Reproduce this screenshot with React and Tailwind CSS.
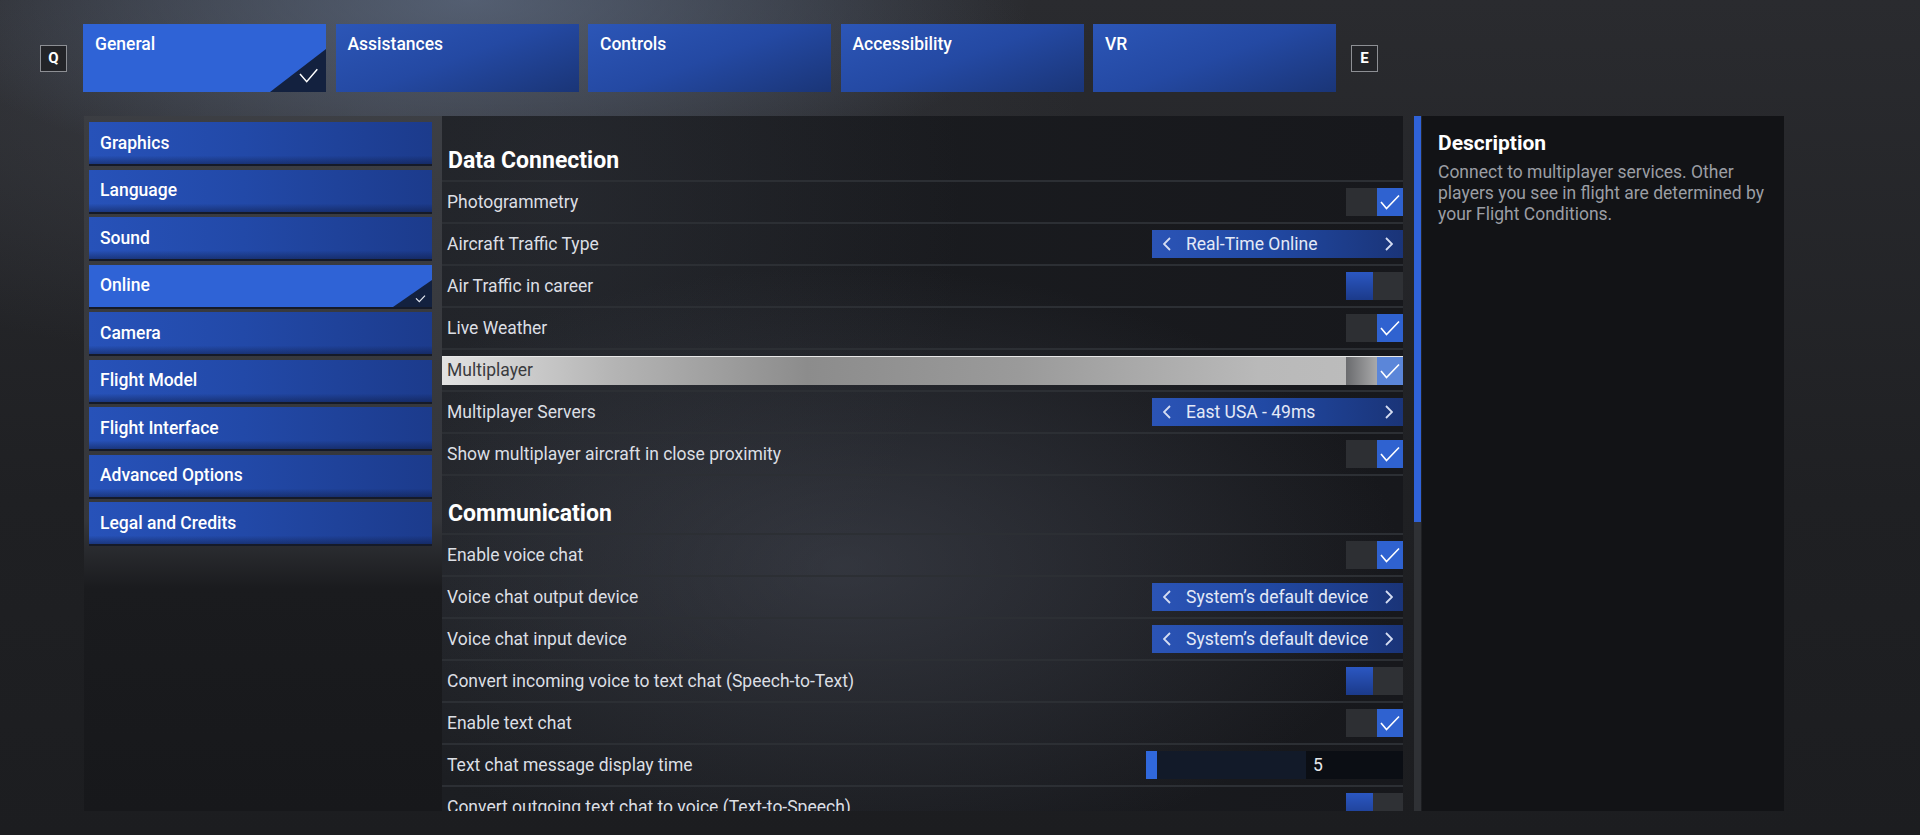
import React from 'react';

const tabs = ['General', 'Assistances', 'Controls', 'Accessibility', 'VR'];

const menu = [
  'Graphics',
  'Language',
  'Sound',
  'Online',
  'Camera',
  'Flight Model',
  'Flight Interface',
  'Advanced Options',
  'Legal and Credits',
];

const sections = [
  {
    title: 'Data Connection',
    rows: [
      { label: 'Photogrammetry', type: 'toggle', on: true },
      { label: 'Aircraft Traffic Type', type: 'select', value: 'Real-Time Online' },
      { label: 'Air Traffic in career', type: 'toggle', on: false },
      { label: 'Live Weather', type: 'toggle', on: true },
      { label: 'Multiplayer', type: 'toggle', on: true, active: true },
      { label: 'Multiplayer Servers', type: 'select', value: 'East USA - 49ms' },
      { label: 'Show multiplayer aircraft in close proximity', type: 'toggle', on: true },
    ],
  },
  {
    title: 'Communication',
    rows: [
      { label: 'Enable voice chat', type: 'toggle', on: true },
      { label: 'Voice chat output device', type: 'select', value: 'System’s default device' },
      { label: 'Voice chat input device', type: 'select', value: 'System’s default device' },
      { label: 'Convert incoming voice to text chat (Speech-to-Text)', type: 'toggle', on: false },
      { label: 'Enable text chat', type: 'toggle', on: true },
      { label: 'Text chat message display time', type: 'slider', value: 5 },
      { label: 'Convert outgoing text chat to voice (Text-to-Speech)', type: 'toggle', on: false },
    ],
  },
];

const KeyHint = ({ children }) => (
  <div className="flex h-[27px] w-[27px] items-center justify-center border-[1.5px] border-[#8d8f94] bg-[#232428] text-[15px] font-bold leading-none text-white">
    {children}
  </div>
);

const Check = ({ className }) => (
  <svg viewBox="0 0 26 28" className={className} fill="none" stroke="currentColor" strokeWidth="1.6">
    <polyline points="4,14 9.5,20.5 22,7.5" />
  </svg>
);

const Toggle = ({ on, active }) => {
  if (on) {
    return (
      <div className="flex h-[28px] w-[57px] shrink-0">
        <div className={active ? 'flex-1 bg-[linear-gradient(90deg,#6a6b6e,#a9a9aa)]' : 'flex-1 bg-[#2d2f33]'} />
        <div className={active ? 'flex w-[26px] items-center justify-center bg-[#5b86d9] text-white' : 'flex w-[26px] items-center justify-center bg-[#2f62d0] text-white'}>
          <Check className="h-[28px] w-[26px]" />
        </div>
      </div>
    );
  }
  return (
    <div className="flex h-[28px] w-[57px] shrink-0">
      <div className="w-[27px] bg-[linear-gradient(180deg,#2b57c2,#1b3a8a)]" />
      <div className="flex-1 bg-[#2f3135]" />
    </div>
  );
};

const Chevron = ({ dir }) => (
  <svg viewBox="0 0 8 14" className="h-[14px] w-[8px] text-[#d5ddf2]" fill="none" stroke="currentColor" strokeWidth="1.8">
    <polyline points={dir === 'left' ? '7,1 1,7 7,13' : '1,1 7,7 1,13'} />
  </svg>
);

const Selector = ({ value }) => (
  <div className="flex h-[28px] w-[251px] shrink-0 items-center bg-[linear-gradient(90deg,#2b54b6,#2149a4_45%,#1a3478)] pl-[11px] pr-[10px] text-[17.5px] text-[#e3e9f7]">
    <Chevron dir="left" />
    <span className="ml-[15px] flex-1 whitespace-nowrap">{value}</span>
    <Chevron dir="right" />
  </div>
);

const Slider = ({ value }) => (
  <div className="flex h-[28px] w-[257px] shrink-0">
    <div className="w-[11px] bg-[#3068dc]" />
    <div className="w-[149px] bg-[#121a29]" />
    <div className="flex flex-1 items-center bg-[#0b0e14] pl-[7px] text-[17.5px] text-[#e6e8ec]">{value}</div>
  </div>
);

const SettingRow = ({ row }) => {
  const control =
    row.type === 'toggle' ? (
      <Toggle on={row.on} active={row.active} />
    ) : row.type === 'select' ? (
      <Selector value={row.value} />
    ) : (
      <Slider value={row.value} />
    );

  if (row.active) {
    return (
      <div className="flex h-[42px] items-center border-b-2 border-[#2c2f34]">
        <div className="flex h-[29px] w-full items-center border-t border-[#e8e8e8] bg-[linear-gradient(90deg,#e2e2e2_0%,#b4b4b4_18%,#8c8c8c_38%,#9a9a9a_60%,#b9b9b9_85%,#bdbdbd_100%)] pl-[5px]">
          <span className="flex-1 text-[17.5px] text-[#3a3b3e]">{row.label}</span>
          {control}
        </div>
      </div>
    );
  }

  return (
    <div className="flex h-[42px] items-center border-b-2 border-[#2c2f34] pl-[5px]">
      <span className="flex-1 whitespace-nowrap text-[17.5px] text-[#dcdfe4]">{row.label}</span>
      {control}
    </div>
  );
};

export default function App() {
  return (
    <div className="h-[835px] w-[1920px] overflow-hidden bg-[radial-gradient(ellipse_560px_190px_at_470px_0px,rgba(105,122,150,0.6),transparent),radial-gradient(ellipse_700px_260px_at_380px_110px,rgba(80,84,94,0.45),transparent),linear-gradient(180deg,#2a2b2f,#1f2023_60%,#1c1d20)] font-['Roboto',sans-serif]">
      <header className="flex h-[92px] items-center pl-[40px] pt-[24px]">
        <KeyHint>Q</KeyHint>
        <div className="ml-[16px] flex gap-[9.5px]">
          {tabs.map((tab, i) => (
            <div
              key={tab}
              className={
                i === 0
                  ? 'relative h-[68px] w-[243px] bg-[#2f63d6] pl-[12px] pt-[9px] text-[17.5px] font-medium leading-[22px] text-white'
                  : 'relative h-[68px] w-[243px] bg-[linear-gradient(160deg,#2c56b7_0%,#2449a3_50%,#1a3577_100%)] pl-[12px] pt-[9px] text-[17.5px] font-medium leading-[22px] text-white'
              }
            >
              {tab}
              {i === 0 && (
                <svg viewBox="0 0 56 43" className="absolute bottom-0 right-0 h-[43px] w-[56px]">
                  <polygon points="56,0 56,43 0,43" fill="#13213f" />
                  <polyline points="30,25 36.7,32.7 47.3,20.3" fill="none" stroke="white" strokeWidth="1.5" />
                </svg>
              )}
            </div>
          ))}
        </div>
        <div className="ml-[15px]">
          <KeyHint>E</KeyHint>
        </div>
      </header>

      <div className="ml-[84px] mt-[24px] flex h-[695px] w-[1700px]">
        {/* category list */}
        <aside className="w-[358px] bg-[linear-gradient(180deg,rgba(60,62,67,0.9)_0%,rgba(55,57,62,0.9)_58%,#1a1b1e_68%,#17181b_100%)] pl-[5px] pt-[6px]">
          <div className="flex w-[343px] flex-col gap-[5.5px]">
            {menu.map((item) => (
              <div
                key={item}
                className={
                  item === 'Online'
                    ? 'relative flex h-[42px] items-center bg-[#2f63d6] pl-[11px] text-[17.5px] font-medium text-white shadow-[0_2px_0_#151a28]'
                    : 'flex h-[42px] items-center bg-[linear-gradient(180deg,transparent_80%,rgba(12,22,55,0.45)),linear-gradient(90deg,#2752b9_0%,#2249a8_45%,#1c3b8c_100%)] pl-[11px] text-[17.5px] font-medium text-white shadow-[0_2px_0_#151a28]'
                }
              >
                {item}
                {item === 'Online' && (
                  <svg viewBox="0 0 39 27" className="absolute bottom-0 right-0 h-[27px] w-[39px]">
                    <polygon points="39,0 39,27 0,27" fill="#13213f" />
                    <polyline points="23,18.3 26.3,21.7 32,15.7" fill="none" stroke="#e6eaf3" strokeWidth="1.2" />
                  </svg>
                )}
              </div>
            ))}
          </div>
        </aside>

        {/* settings list */}
        <main className="w-[961px] overflow-hidden bg-[radial-gradient(ellipse_560px_300px_at_400px_450px,rgba(92,97,112,0.38),transparent),radial-gradient(ellipse_400px_500px_at_120px_80px,rgba(60,64,74,0.3),transparent),linear-gradient(90deg,#1c1e22,#17181c)] pt-[7px]">
          {sections.map((section) => (
            <section key={section.title}>
              <div className="h-[59px] border-b-2 border-[#2c2f34] pl-[6px] pt-[24px] text-[23px] font-bold leading-[28px] text-white">
                {section.title}
              </div>
              {section.rows.map((row) => (
                <SettingRow key={row.label} row={row} />
              ))}
            </section>
          ))}
        </main>

        {/* scrollbar */}
        <div className="ml-[11px] flex w-[7px] flex-col bg-[#2f3135]">
          <div className="h-[406px] bg-[#2f62d8]" />
        </div>

        {/* description */}
        <div className="ml-[1px] w-[362px] bg-[#121316] pl-[16px] pt-[14px]">
          <h2 className="text-[21px] font-bold leading-[26px] text-white">Description</h2>
          <p className="mt-[6px] w-[335px] text-[17.5px] leading-[21px] text-[#9b9ea4]">
            Connect to multiplayer services. Other players you see in flight are determined by your Flight Conditions.
          </p>
        </div>
      </div>
    </div>
  );
}
